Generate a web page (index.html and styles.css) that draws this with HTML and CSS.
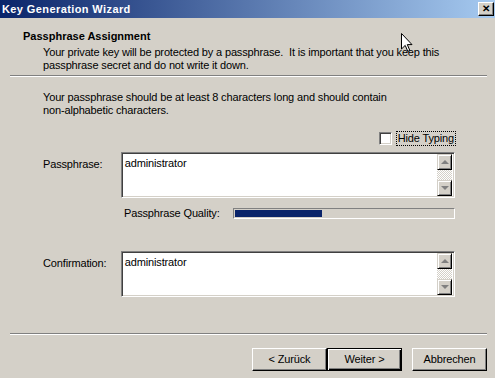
FILE: index.html
```html
<!DOCTYPE html>
<html lang="de">
<head>
  <meta charset="UTF-8" />
  <title>Key Generation Wizard</title>
  <link rel="stylesheet" href="styles.css">
</head>
<body>
  <div class="window">
    <div class="titlebar">
      <span class="title">Key Generation Wizard</span>
      <span class="close">&#x2715;</span>
    </div>

    <div class="header">
      <h1>Passphrase Assignment</h1>
      <p>Your private key will be protected by a passphrase.&nbsp; It is important that you keep this<br>passphrase secret and do not write it down.</p>
    </div>
    <div class="sep"></div>

    <div class="content">
      <p class="intro">Your passphrase should be at least 8 characters long and should contain<br>non-alphabetic characters.</p>

      <div class="hide-row">
        <span class="checkbox"></span>
        <span class="focus">Hide Typing</span>
      </div>

      <div class="field-row">
        <span class="label">Passphrase:</span>
        <div class="textbox">
          <div class="text">administrator</div>
          <div class="scrollbar">
            <span class="sbtn up"></span>
            <span class="track"></span>
            <span class="sbtn down"></span>
          </div>
        </div>
      </div>

      <div class="quality-row">
        <span class="qlabel">Passphrase Quality:</span>
        <div class="progress"><div class="fill"></div></div>
      </div>

      <div class="field-row confirm">
        <span class="label">Confirmation:</span>
        <div class="textbox">
          <div class="text">administrator</div>
          <div class="scrollbar">
            <span class="sbtn up"></span>
            <span class="track"></span>
            <span class="sbtn down"></span>
          </div>
        </div>
      </div>
    </div>

    <div class="sep bottom"></div>

    <div class="buttons">
      <span class="btn">&lt; Zurück</span>
      <span class="btn default">Weiter &gt;</span>
      <span class="btn cancel">Abbrechen</span>
    </div>

    <svg class="cursor" width="12" height="19" viewBox="0 0 12 19">
      <path d="M0.5 0.5 L0.5 16 L4.2 12.4 L6.8 18.3 L8.8 17.4 L6.3 11.6 L11 11.6 Z" fill="#fff" stroke="#000" stroke-width="1"/>
    </svg>
  </div>
</body>
</html>
```

FILE: styles.css
```css
:root {
  --face: #d4d0c8;
  --shadow: #808080;
  --dark: #404040;
  --hilite: #ffffff;
  --title-dark: #0a246a;
  --title-light: #a6caf0;
}

body {
  margin: 0;
  font-family: 'Liberation Sans', Arial, sans-serif;
  font-size: 11px;
  line-height: 13px;
  letter-spacing: -0.15px;
  color: #000;
  background: var(--face);
}

.window {
  position: relative;
  width: 495px;
  height: 378px;
  background: var(--face);
  overflow: hidden;
}

/* title bar */
.titlebar {
  height: 18px;
  display: flex;
  align-items: center;
  justify-content: space-between;
  padding: 0 1px 0 2px;
  background: linear-gradient(to right, var(--title-dark), var(--title-light));
  box-sizing: border-box;
}

.title {
  color: #fff;
  font-weight: bold;
  font-size: 11px;
  letter-spacing: 0.4px;
}

.close {
  width: 16px;
  height: 14px;
  box-sizing: border-box;
  background: var(--face);
  border: 1px solid;
  border-color: var(--hilite) #000 #000 var(--hilite);
  box-shadow: inset -1px -1px 0 var(--shadow);
  font-size: 10px;
  line-height: 11px;
  font-weight: bold;
  text-align: center;
  color: #000;
  letter-spacing: 0;
}

/* header */
.header {
  padding: 12px 0 0 23px;
  height: 57px;
  box-sizing: border-box;
}

.header h1 {
  margin: 0;
  font-size: 11px;
  line-height: 13px;
  font-weight: bold;
  letter-spacing: 0;
}

.header p {
  margin: 3px 0 0 20px;
}

.sep {
  margin: 0 8px 0 10px;
  height: 1px;
  background: var(--shadow);
  border-bottom: 1px solid var(--hilite);
}

/* content */
.content {
  padding: 14px 40px 0 43px;
  height: 256px;
  box-sizing: border-box;
}

.intro {
  margin: 0;
}

.hide-row {
  margin-top: 15px;
  display: flex;
  justify-content: flex-end;
  align-items: center;
  gap: 5px;
}

.checkbox {
  width: 13px;
  height: 13px;
  box-sizing: border-box;
  background: #fff;
  border: 1px solid;
  border-color: var(--shadow) var(--hilite) var(--hilite) var(--shadow);
  box-shadow: inset 1px 1px 0 var(--dark), inset -1px -1px 0 var(--face);
}

.focus {
  outline: 1px dotted #000;
  padding: 0 1px;
}

.field-row {
  margin-top: 7px;
  display: flex;
  align-items: flex-start;
}

.field-row .label {
  width: 78px;
  padding-top: 6px;
}

.textbox {
  width: 335px;
  height: 46px;
  box-sizing: border-box;
  display: flex;
  background: #fff;
  border: 1px solid;
  border-color: var(--shadow) var(--hilite) var(--hilite) var(--shadow);
  box-shadow: inset 1px 1px 0 var(--dark), inset -1px -1px 0 var(--face);
  padding: 1px;
}

.textbox .text {
  flex: 1;
  padding: 3px 2px;
}

.scrollbar {
  width: 15px;
  display: flex;
  flex-direction: column;
  margin-right: 1px;
}

.track {
  flex: 1;
  background-color: #fff;
  background-image: repeating-conic-gradient(var(--face) 0 25%, #fff 0 50%);
  background-size: 2px 2px;
}

.sbtn {
  height: 16px;
  box-sizing: border-box;
  background: var(--face);
  border: 1px solid;
  border-color: var(--face) #000 #000 var(--face);
  box-shadow: inset 1px 1px 0 var(--hilite), inset -1px -1px 0 var(--shadow);
  display: flex;
  align-items: center;
  justify-content: center;
}

.sbtn::after {
  content: "";
  width: 0;
  height: 0;
  border-left: 4px solid transparent;
  border-right: 4px solid transparent;
}

.sbtn.up::after {
  border-bottom: 4px solid var(--shadow);
}

.sbtn.down::after {
  border-top: 4px solid var(--shadow);
}

.quality-row {
  margin-top: 9px;
  padding-left: 81px;
  display: flex;
  align-items: center;
}

.qlabel {
  width: 109px;
}

.progress {
  width: 222px;
  height: 11px;
  box-sizing: border-box;
  border: 1px solid;
  border-color: var(--shadow) var(--hilite) var(--hilite) var(--shadow);
  padding: 1px;
}

.fill {
  width: 87px;
  height: 100%;
  background: var(--title-dark);
}

.field-row.confirm {
  margin-top: 31px;
}

/* buttons */
.buttons {
  padding: 13px 8px 0 0;
  display: flex;
  justify-content: flex-end;
}

.btn {
  width: 75px;
  height: 23px;
  box-sizing: border-box;
  display: flex;
  align-items: center;
  justify-content: center;
  background: var(--face);
  border: 1px solid;
  border-color: var(--hilite) #000 #000 var(--hilite);
  box-shadow: inset -1px -1px 0 var(--shadow), inset 1px 1px 0 var(--face);
}

.btn.default {
  border: 1px solid #000;
  box-shadow: inset 1px 1px 0 var(--hilite), inset -1px -1px 0 #000, inset -2px -2px 0 var(--shadow);
}

.btn.cancel {
  margin-left: 10px;
}

.cursor {
  position: absolute;
  left: 401px;
  top: 33px;
}
```
